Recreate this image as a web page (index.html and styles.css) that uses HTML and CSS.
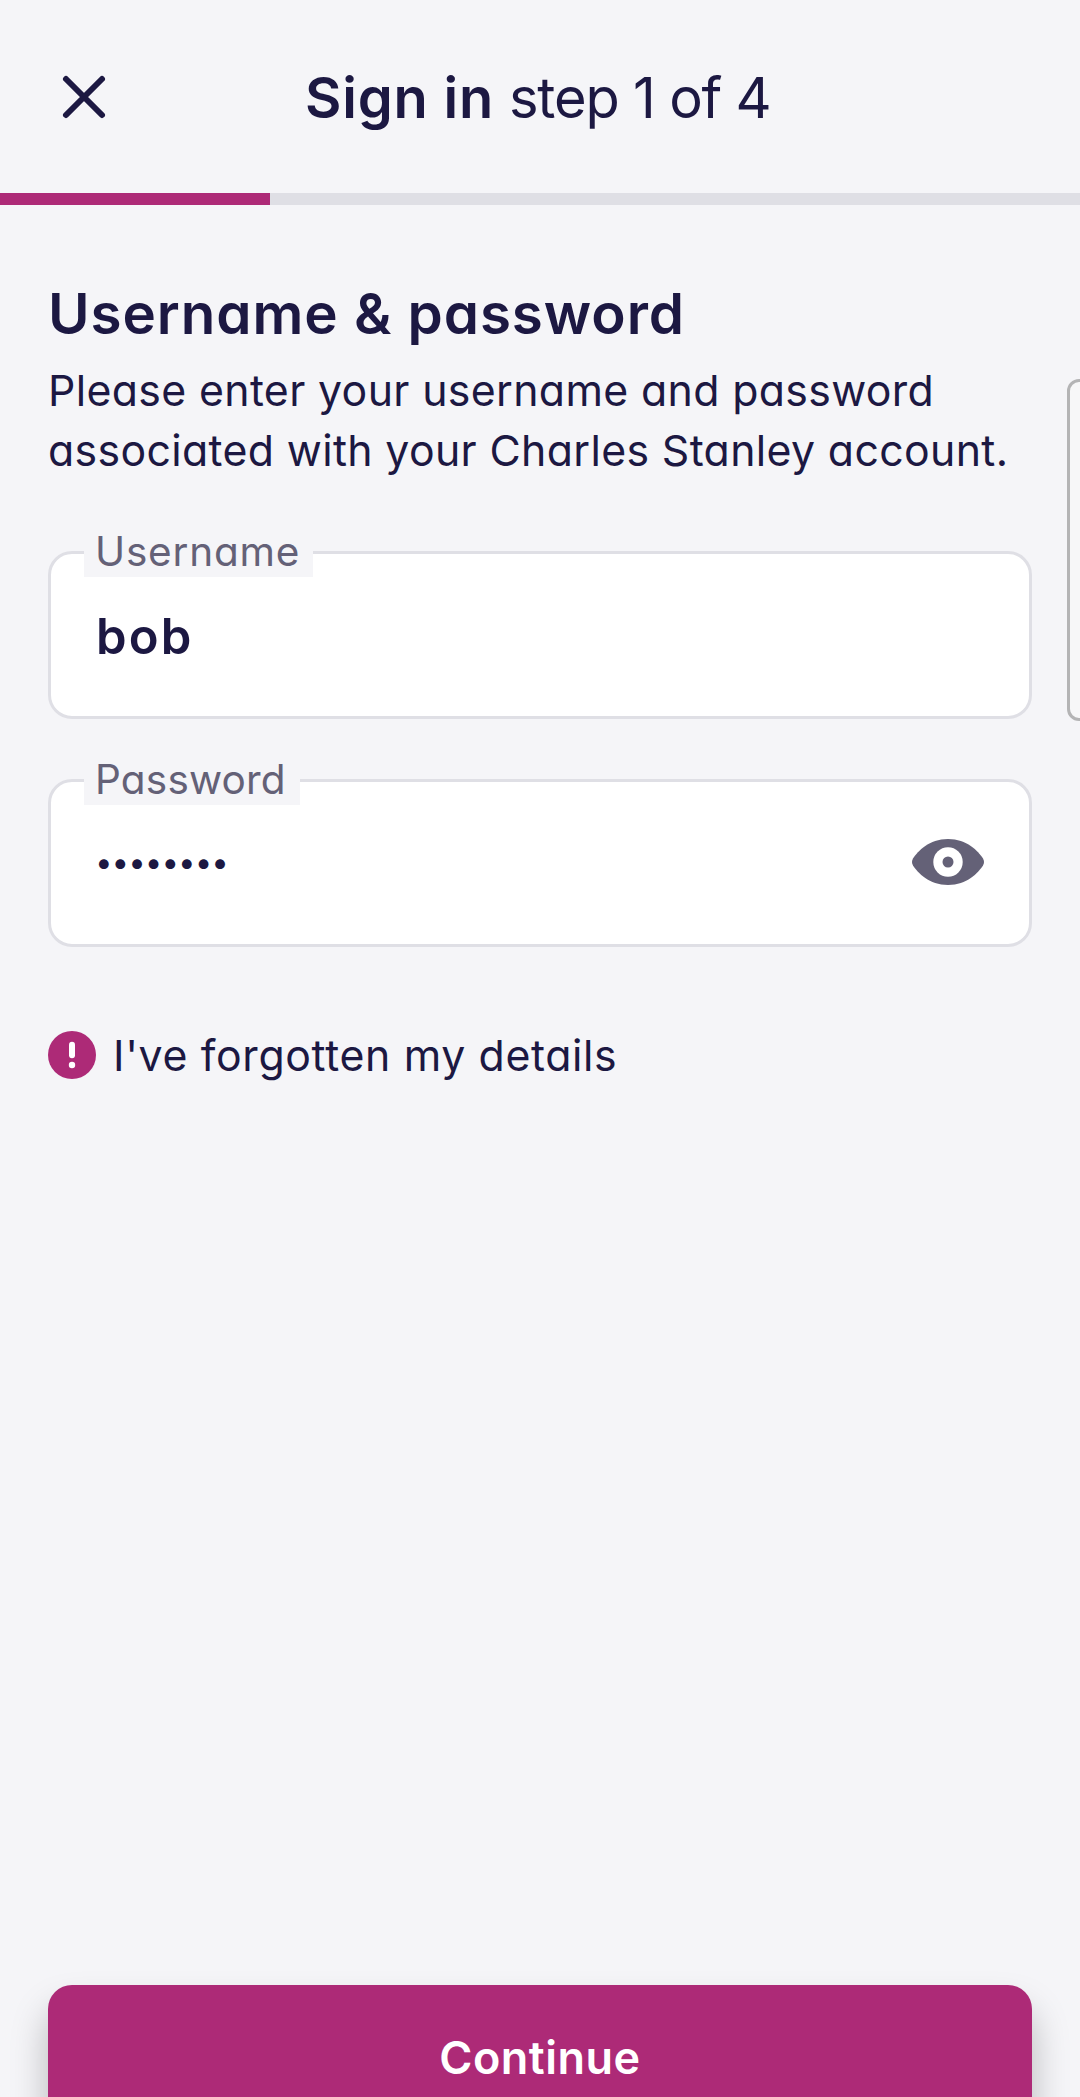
FILE: index.html
```
<!DOCTYPE html>
<html lang="en">
<head>
<meta charset="utf-8">
<title>Sign in</title>
<link rel="stylesheet" href="styles.css">
</head>
<body>
<div class="page">
  <header class="header">
    <svg class="close" viewBox="0 0 48 48" aria-label="Close"><path d="M6 6 42 42M42 6 6 42"/></svg>
    <h1 class="header-title"><span class="strong">Sign in</span><span class="step">step 1 of 4</span></h1>
  </header>
  <div class="progress"><div class="progress-bar"></div></div>
  <main class="main">
    <h2 class="title">Username &amp; password</h2>
    <p class="intro">Please enter your username and password<br>associated with your Charles Stanley account.</p>
    <div class="fields">
      <div class="field">
        <span class="label label-user">Username</span>
        <span class="value">bob</span>
      </div>
      <div class="field">
        <span class="label label-pass">Password</span>
        <span class="value dots">••••••••</span>
        <svg class="eye" viewBox="0 0 72 46"><path d="M36 0C55 0 66 12 71 19.500Q73 23 71 26.500C66 34 55 46 36 46S6 34 1 26.500Q-1 23 1 19.500C6 12 17 0 36 0Z" fill="#646177"/><circle cx="36" cy="23" r="14.700" fill="#fff"/><circle cx="36" cy="23" r="5.500" fill="#646177"/></svg>
      </div>
    </div>
    <div class="forgot">
      <svg class="alert" viewBox="0 0 48 48"><circle cx="24" cy="24" r="24" fill="#ad2a77"/><path d="M24 13.800V24.200" stroke="#fff" stroke-width="6" stroke-linecap="round"/><circle cx="24" cy="34" r="3.200" fill="#fff"/></svg>
      <span class="forgot-text">I've forgotten my details</span>
    </div>
    <button class="continue">Continue</button>
  </main>
  <div class="edge-panel"></div>
</div>
</body>
</html>
```

FILE: styles.css
```
* { box-sizing: border-box; }

body {
  margin: 0;
  background: #f5f5f8;
  color: #1c1842;
  font-family: Inter, "Liberation Sans", sans-serif;
  font-feature-settings: "cv11";
}

.page {
  position: relative;
  display: flex;
  flex-direction: column;
  height: 2097px;
  overflow: hidden;
}

.header {
  display: grid;
  grid-template-columns: 245px 1fr;
  align-items: center;
  height: 193px;
  padding: 2px 0 0 60px;
}

.close {
  width: 48px;
  height: 48px;
  margin-top: -2px;
  fill: none;
  stroke: #1c1842;
  stroke-width: 6;
  stroke-linecap: round;
}

.header-title {
  display: flex;
  gap: 15px;
  margin: 0;
  font-size: 56px;
  font-weight: 400;
  line-height: 72px;
  white-space: nowrap;
}

.strong { font-weight: 600; letter-spacing: 0.8px; }
.step { letter-spacing: -1.2px; }

.progress {
  height: 12px;
  background: #dfdfe5;
}

.progress-bar {
  width: 25%;
  height: 100%;
  background: #ad2a77;
}

.main {
  display: flex;
  flex: 1;
  flex-direction: column;
  min-height: 0;
  padding: 73px 48px 0;
}

.title {
  margin: 0;
  font-size: 56.5px;
  font-weight: 600;
  line-height: 72px;
  letter-spacing: 0.95px;
}

.intro {
  margin: 11px 0 0;
  font-size: 42.8px;
  line-height: 60px;
  letter-spacing: 0.36px;
  white-space: nowrap;
}

.fields {
  display: flex;
  flex-direction: column;
  gap: 60px;
  margin-top: 70px;
}

.field {
  position: relative;
  display: flex;
  align-items: center;
  height: 168px;
  padding: 0 45px;
  border: 3px solid #dfdfe5;
  border-radius: 24px;
  background: #fff;
}

.label {
  position: absolute;
  top: -29px;
  left: 33px;
  height: 52px;
  padding-left: 11px;
  background: #f5f5f8;
  color: #646177;
  font-size: 40.5px;
  line-height: 54px;
  letter-spacing: 0.8px;
}

.label-user { width: 229px; }
.label-pass { width: 216px; letter-spacing: 0.2px; }

.value {
  padding-top: 3px;
  font-size: 49px;
  font-weight: 600;
  letter-spacing: 2.2px;
}

.dots {
  padding: 0 0 4px;
  font-size: 31px;
  letter-spacing: 1px;
}

.eye {
  width: 72px;
  height: 46px;
  margin: -2px 0 0 auto;
}

.forgot {
  display: flex;
  align-items: center;
  gap: 17px;
  height: 48px;
  margin-top: 84px;
}

.alert { width: 48px; height: 48px; }

.forgot-text {
  padding-top: 1px;
  font-size: 42.8px;
  line-height: 48px;
  letter-spacing: 0.65px;
}

.continue {
  flex: none;
  height: 144px;
  margin: auto 0 -32px;
  padding: 0;
  border: 0;
  border-radius: 24px;
  background: #ad2a77;
  box-shadow: 0 24px 36px rgba(0, 0, 0, 0.25);
  color: #fff;
  font: 600 45px Inter, sans-serif;
  letter-spacing: 0.5px;
}

/* drawer handle peeking in from the right edge */
.edge-panel {
  position: absolute;
  top: 379px;
  right: -12px;
  width: 25px;
  height: 342px;
  border: 3px solid #b4b4b5;
  border-radius: 12px;
  background: #f7f7f8;
}
```
